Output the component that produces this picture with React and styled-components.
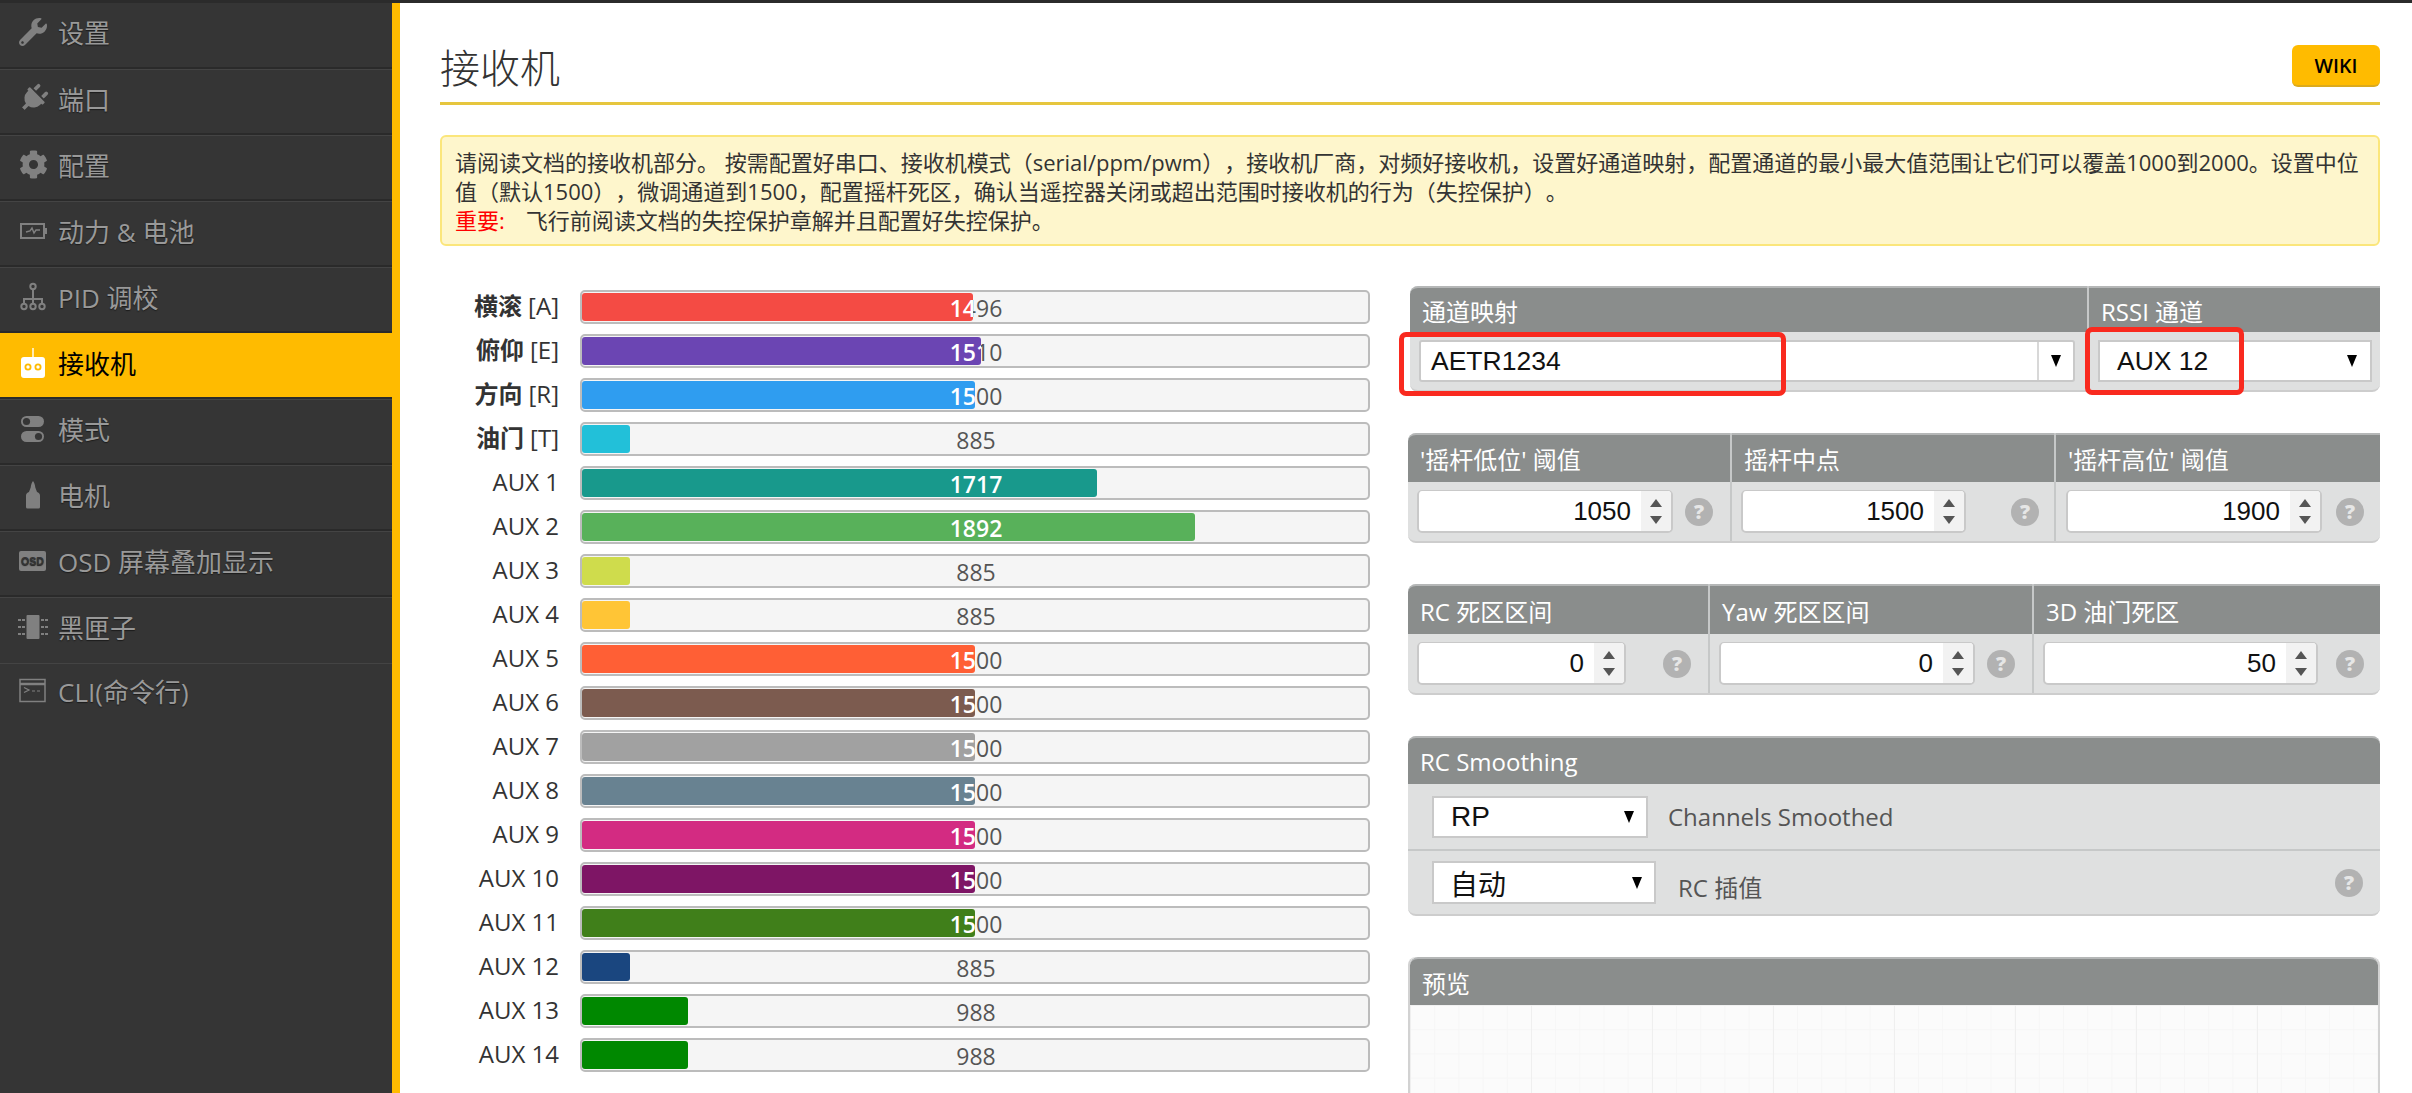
import styled, { createGlobalStyle } from "styled-components";
import { FaWrench, FaPlug, FaCog } from "react-icons/fa";

const Global = createGlobalStyle`
  html, body { margin: 0; padding: 0; background: #fff; }
  body { font-family: "Open Sans", "Noto Sans CJK SC", sans-serif; overflow: hidden; }
  * { box-sizing: border-box; }
`;

const ICON = "#808080";

const BatteryIcon = () => (
  <svg width="30" height="30" viewBox="0 0 30 30" fill="none">
    <rect x="3" y="8" width="23" height="14" stroke={ICON} strokeWidth="2" />
    <rect x="26" y="12" width="3" height="6" fill={ICON} />
    <path d="M8 16l4-1 2-3 2 5 2-3h4" stroke={ICON} strokeWidth="1.4" />
  </svg>
);
const SitemapIcon = () => (
  <svg width="30" height="30" viewBox="0 0 30 30" fill="none" stroke={ICON} strokeWidth="2">
    <circle cx="15" cy="4.5" r="2.7" />
    <circle cx="6" cy="24.5" r="2.7" />
    <circle cx="15" cy="24.5" r="2.7" />
    <circle cx="24" cy="24.5" r="2.7" />
    <path d="M15 7v15M6 22v-5h18v5" />
  </svg>
);
const RemoteIcon = () => (
  <svg width="30" height="30" viewBox="0 0 30 30">
    <path d="M14.3 0h1.4v9h-1.4z" fill="#fff" />
    <rect x="3" y="9" width="24" height="21" rx="3" fill="#fff" />
    <circle cx="10" cy="19" r="2.6" fill="none" stroke="#ffbb00" strokeWidth="1.8" />
    <circle cx="20" cy="19" r="2.6" fill="none" stroke="#ffbb00" strokeWidth="1.8" />
  </svg>
);
const ToggleIcon = () => (
  <svg width="30" height="30" viewBox="0 0 30 30">
    <rect x="3" y="2" width="23" height="11" rx="5.5" fill={ICON} />
    <circle cx="8.5" cy="7.5" r="3.6" fill="#353535" />
    <rect x="3" y="17" width="23" height="11" rx="5.5" fill={ICON} />
    <circle cx="20.5" cy="22.5" r="3.6" fill="#353535" />
  </svg>
);
const MotorIcon = () => (
  <svg width="30" height="30" viewBox="0 0 30 30">
    <path d="M15 1c1.2 1.400 2 3.500 2.300 6.500L19 12c1.500 .6 3 1.500 3 3.500v11.500a1.500 1.500 0 0 1-1.500 1.500h-11a1.500 1.500 0 0 1-1.500-1.500v-11.500c0-2 1.500-2.900 3-3.500l1.700-4.500c.3-3 1.100-5.100 2.300-6.500z" fill={ICON} />
  </svg>
);
const OsdIcon = () => (
  <svg width="30" height="30" viewBox="0 0 30 30">
    <rect x="1" y="5" width="27" height="20" rx="2" fill={ICON} />
    <text x="14.5" y="19" fontSize="10.5" fontWeight="800" textAnchor="middle" fontFamily="'Liberation Sans', sans-serif" fill="#353535">OSD</text>
  </svg>
);
const ChipIcon = () => (
  <svg width="30" height="30" viewBox="0 0 30 30" fill={ICON}>
    <rect x="8.500" y="3" width="13" height="24" rx="1" />
    <path d="M0 7h3v2H0zM4 7h3v2H4zM0 14h3v2H0zM4 14h3v2H4zM0 21h3v2H0zM4 21h3v2H4zM23 7h3v2h-3zM27 7h3v2h-3zM23 14h3v2h-3zM27 14h3v2h-3zM23 21h3v2h-3zM27 21h3v2h-3z" />
  </svg>
);
const CliIcon = () => (
  <svg width="30" height="30" viewBox="0 0 30 30" fill="none" stroke={ICON}>
    <rect x="2" y="3.500" width="25" height="22" strokeWidth="1.500" />
    <path d="M2 8h25" strokeWidth="2.500" />
    <path d="M6 11.500l5 2.500-5 2.500M14 15h3M19 15h3" strokeWidth="1.200" />
  </svg>
);
const PlugIcon = styled(FaPlug)`
  transform: rotate(45deg);
`;

const navItems = [
  { label: "设置", icon: <FaWrench size={28} color={ICON} /> },
  { label: "端口", icon: <PlugIcon size={29} color={ICON} /> },
  { label: "配置", icon: <FaCog size={29} color={ICON} /> },
  { label: "动力 & 电池", icon: <BatteryIcon /> },
  { label: "PID 调校", icon: <SitemapIcon /> },
  { label: "接收机", icon: <RemoteIcon />, active: true },
  { label: "模式", icon: <ToggleIcon /> },
  { label: "电机", icon: <MotorIcon /> },
  { label: "OSD 屏幕叠加显示", icon: <OsdIcon /> },
  { label: "黑匣子", icon: <ChipIcon /> },
  { label: "CLI(命令行)", icon: <CliIcon /> },
];

const channels = [
  ["横滚", "[A]", 1496, "#f44b44"],
  ["俯仰", "[E]", 1510, "#6b45b3"],
  ["方向", "[R]", 1500, "#2f9df0"],
  ["油门", "[T]", 885, "#22c0d9"],
  ["", "AUX 1", 1717, "#18998c"],
  ["", "AUX 2", 1892, "#58b15a"],
  ["", "AUX 3", 885, "#cfdc4c"],
  ["", "AUX 4", 885, "#ffc536"],
  ["", "AUX 5", 1500, "#ff5f35"],
  ["", "AUX 6", 1500, "#7c5b4f"],
  ["", "AUX 7", 1500, "#a1a1a1"],
  ["", "AUX 8", 1500, "#688291"],
  ["", "AUX 9", 1500, "#d32b82"],
  ["", "AUX 10", 1500, "#7e1565"],
  ["", "AUX 11", 1500, "#407f1a"],
  ["", "AUX 12", 885, "#1a467f"],
  ["", "AUX 13", 988, "#008800"],
  ["", "AUX 14", 988, "#008800"],
];

const sticks = [
  { title: "'摇杆低位' 阈值", value: 1050, pad: 9, w: 256, gap: 12 },
  { title: "摇杆中点", value: 1500, pad: 9, w: 225, gap: 45 },
  { title: "'摇杆高位' 阈值", value: 1900, pad: 10, w: 256, gap: 14 },
];
const deadbands = [
  { title: "RC 死区区间", value: 0, pad: 9, w: 209, gap: 37 },
  { title: "Yaw 死区区间", value: 0, pad: 9, w: 256, gap: 12 },
  { title: "3D 油门死区", value: 50, pad: 9, w: 275, gap: 18 },
];

const Page = styled.div`
  width: 2412px;
  height: 1093px;
  overflow: hidden;
  display: flex;
  flex-direction: column;
`;
const TopBar = styled.div`
  height: 3px;
  flex: none;
  background: #2b2b2b;
`;
const Main = styled.div`
  flex: 1;
  display: flex;
  min-height: 0;
`;
const Sidebar = styled.nav`
  width: 400px;
  flex: none;
  background: #353535;
  border-right: 8px solid #ffbb00;
`;
const NavRow = styled.div`
  height: 66px;
  padding: 0 0 6px 18px;
  display: flex;
  align-items: center;
  gap: 10px;
  font-size: 26px;
  color: ${(p) => (p.$active ? "#000" : "#999")};
  background: ${(p) => (p.$active ? "#ffbb00" : "transparent")};
  margin-right: ${(p) => (p.$active ? "-8px" : "0")};
  position: relative;
  border-top: 1px solid ${(p) => (p.$active ? "#ffbb00" : "#444")};
  border-bottom: 2px solid ${(p) => (p.$active ? "#ffbb00" : p.$last ? "transparent" : "#2a2a2a")};
  text-shadow: ${(p) => (p.$active ? "none" : "0 1px 1px #1c1c1c")};
  &:first-child { border-top: 0; }
  &:last-child { padding-bottom: 10px; }
  ${(p) =>
    p.$active &&
    `&::after {
      content: "";
      position: absolute;
      left: 0;
      right: 8px;
      bottom: -2px;
      height: 2px;
      background: #2a2a2a;
    }`}
`;
const NavIcon = styled.span`
  width: 30px;
  height: 30px;
  flex: none;
  display: flex;
  align-items: center;
  justify-content: center;
`;
const Content = styled.main`
  flex: 1;
  padding: 0 32px 0 40px;
  min-width: 0;
`;
const TitleBar = styled.header`
  height: 102px;
  display: flex;
  justify-content: space-between;
  align-items: flex-end;
  border-bottom: 3px solid #e6c63e;
  padding-bottom: 15px;
`;
const Title = styled.h1`
  margin: 0 0 -11px 0;
  font-size: 40px;
  font-weight: 300;
  line-height: 60px;
  color: #333;
`;
const WikiButton = styled.a`
  width: 88px;
  height: 42px;
  display: flex;
  align-items: center;
  justify-content: center;
  background: #ffbb00;
  border-radius: 6px;
  border-bottom: 2px solid #dcaa1c;
  color: #000;
  font-size: 19.5px;
  font-weight: 600;
`;
const Note = styled.div`
  margin-top: 30px;
  height: 111px;
  padding: 11px 12px 0 13px;
  background: #fef6cc;
  border: 2px solid #fbe67b;
  border-radius: 6px;
  font-size: 22px;
  line-height: 29px;
  color: #333;
  text-spacing-trim: space-all;
`;
const Strong = styled.span`
  color: #f00;
  margin-right: 21px;
`;
const Columns = styled.div`
  display: flex;
  margin-top: 40px;
  gap: 38px;
`;
const Receiver = styled.section`
  width: 930px;
  flex: none;
  padding-top: 4px;
  display: flex;
  flex-direction: column;
  gap: 10px;
`;
const BarRow = styled.div`
  display: grid;
  grid-template-columns: 119px 790px;
  gap: 21px;
  align-items: center;
`;
const BarLabel = styled.div`
  text-align: right;
  font-size: 24px;
  line-height: 32px;
  color: #333;
  white-space: nowrap;
  margin-top: -2px;
`;
const BarLabelHan = styled.span`
  font-weight: 700;
  margin-right: 6px;
`;
const Track = styled.div`
  position: relative;
  height: 34px;
  background: #f5f5f5;
  border: 2px solid #bcbcbc;
  border-radius: 5px;
`;
const BarValue = styled.div`
  width: 786px;
  padding-left: 2px;
  text-align: center;
  font-size: 23px;
  line-height: 32px;
  color: ${(p) => (p.$light ? "#fff" : "#555")};
  font-weight: ${(p) => (p.$light ? 600 : 400)};
`;
const BarFill = styled.div`
  position: absolute;
  left: 0;
  top: 1px;
  bottom: 1px;
  overflow: hidden;
  border-radius: 3px;
  background: ${(p) => p.$color};
  ${BarValue} { margin-top: -1px; }
`;
const Settings = styled.section`
  flex: 1;
  min-width: 0;
  display: flex;
  flex-direction: column;
  gap: 41px;
`;
const Panel = styled.div`
  position: relative;
  margin-left: ${(p) => p.$inset || 0}px;
  height: ${(p) => (p.$height ? `${p.$height}px` : "auto")};
  background: #dfe0e0;
  border-radius: 8px;
  border-bottom: 2px solid #cdcdcd;
  display: grid;
  grid-template-columns: ${(p) => p.$cols || "1fr"};
`;
const Column = styled.div`
  display: flex;
  flex-direction: column;
  border-left: ${(p) => (p.$first ? "0" : "2px solid #c6c8c8")};
`;
const Head = styled.div`
  height: ${(p) => p.$h || 48}px;
  flex: none;
  display: flex;
  align-items: center;
  padding-left: 12px;
  background: #8a8d8c;
  color: #fff;
  font-size: 24px;
  border-top: 2px solid #b5b7b7;
  border-radius: ${(p) => (p.$first ? "8px 0 0 0" : "0")};
  &:last-child { border-radius: 0; }
`;
const RoundHead = styled(Head)`
  border-radius: 8px 8px 0 0;
`;
const Cell = styled.div`
  flex: 1;
  display: flex;
  align-items: center;
  padding-left: ${(p) => p.$pad}px;
`;
const NumberBox = styled.div`
  width: ${(p) => p.$w}px;
  height: 43px;
  flex: none;
  display: flex;
  background: #fff;
  border: 2px solid #c9c9c9;
  border-top-width: 1px;
  border-radius: 5px;
  overflow: hidden;
  font-family: "Liberation Sans", Arial, sans-serif;
  font-size: 26px;
  color: #111;
`;
const NumberText = styled.div`
  flex: 1;
  text-align: right;
  line-height: 40px;
  padding-right: 10px;
`;
const Spinner = styled.div`
  width: 30px;
  flex: none;
  background: #f2f2f2;
  display: flex;
  flex-direction: column;
  align-items: center;
  justify-content: center;
  gap: 9px;
`;
const Tri = styled.span`
  width: 0;
  height: 0;
  border-left: 6.500px solid transparent;
  border-right: 6.500px solid transparent;
  ${(p) => (p.$down ? "border-top: 8px solid #555;" : "border-bottom: 8px solid #555;")}
`;
const Help = styled.span`
  width: 28px;
  height: 28px;
  flex: none;
  margin-left: ${(p) => p.$gap || 0}px;
  border-radius: 50%;
  background: #b2b2b2;
  color: #e6e6e6;
  font-size: 20px;
  font-weight: 800;
  line-height: 28px;
  text-align: center;
`;
const SelectBox = styled.div`
  width: ${(p) => p.$w}px;
  height: ${(p) => p.$h || 42}px;
  flex: none;
  display: flex;
  align-items: center;
  background: #fff;
  border: 2px solid #c9c9c9;
  border-radius: ${(p) => p.$radius || 0}px;
  font-family: "Liberation Sans", "Noto Sans CJK SC", Arial, sans-serif;
  font-size: ${(p) => p.$size || 26.5}px;
  color: #111;
  padding-left: ${(p) => p.$pad}px;
`;
const SelectText = styled.span`
  flex: 1;
`;
const CaretSlot = styled.span`
  width: ${(p) => p.$w}px;
  flex: none;
  align-self: stretch;
  display: flex;
  align-items: center;
  justify-content: center;
  border-left: ${(p) => (p.$line ? "2px solid #d8d8d8" : "0")};
`;
const Caret = styled.span`
  width: 0;
  height: 0;
  border-left: 5.500px solid transparent;
  border-right: 5.500px solid transparent;
  border-top: 12px solid #000;
`;
const Callout = styled.div`
  position: absolute;
  left: ${(p) => p.$left}px;
  top: ${(p) => p.$top}px;
  width: ${(p) => p.$w}px;
  height: ${(p) => p.$h}px;
  border: 5px solid #f92a1f;
  border-radius: 7px;
  pointer-events: none;
`;
const SmoothRow = styled.div`
  height: ${(p) => p.$h}px;
  display: flex;
  align-items: center;
  padding: 0 17px 0 24px;
  border-bottom: ${(p) => (p.$line ? "2px solid #c6c8c8" : "0")};
`;
const SmoothLabel = styled.span`
  margin-left: ${(p) => p.$gap}px;
  margin-top: ${(p) => p.$drop || 0}px;
  font-size: 24px;
  color: #555;
  flex: 1;
`;
const PreviewPanel = styled.div`
  height: 300px;
  border: 2px solid #d2d2d2;
  border-top: 0;
  border-radius: 8px 8px 0 0;
`;
const Canvas = styled.div`
  height: 240px;
  background-color: #fbfbfb;
  background-image:
    linear-gradient(to right, #efefef 1px, transparent 1px),
    linear-gradient(to bottom, #f1f1f1 1px, transparent 1px),
    linear-gradient(to right, #f6f6f6 1px, transparent 1px),
    linear-gradient(to bottom, #f6f6f6 1px, transparent 1px);
  background-size: 121px 121px, 121px 121px, 24.200px 24.200px, 24.200px 24.200px;
`;

const pct = (v) => ((v - 800) / 1400) * 100;

const Meter = ({ han, name, value, color }) => (
  <BarRow>
    <BarLabel>
      {han && <BarLabelHan>{han}</BarLabelHan>}
      {name}
    </BarLabel>
    <Track>
      <BarValue>{value}</BarValue>
      <BarFill $color={color} style={{ width: `${pct(value)}%` }}>
        <BarValue $light>{value}</BarValue>
      </BarFill>
    </Track>
  </BarRow>
);

const NumberField = ({ value, w }) => (
  <NumberBox $w={w}>
    <NumberText>{value}</NumberText>
    <Spinner>
      <Tri />
      <Tri $down />
    </Spinner>
  </NumberBox>
);

const FieldGroup = ({ fields, cols, height, headHeight }) => (
  <Panel $cols={cols} $height={height}>
    {fields.map((f, i) => (
      <Column key={f.title} $first={i === 0}>
        <Head $first={i === 0} $h={headHeight}>{f.title}</Head>
        <Cell $pad={f.pad}>
          <NumberField value={f.value} w={f.w} />
          <Help $gap={f.gap}>?</Help>
        </Cell>
      </Column>
    ))}
  </Panel>
);

export default function App() {
  return (
    <Page>
      <Global />
      <TopBar />
      <Main>
        <Sidebar>
          {navItems.map((n, i) => (
            <NavRow key={n.label} $active={n.active} $last={i >= navItems.length - 2}>
              <NavIcon>{n.icon}</NavIcon>
              {n.label}
            </NavRow>
          ))}
        </Sidebar>
        <Content>
          <TitleBar>
            <Title>接收机</Title>
            <WikiButton>WIKI</WikiButton>
          </TitleBar>
          <Note>
            请阅读文档的接收机部分。 按需配置好串口、接收机模式（serial/ppm/pwm），接收机厂商，对频好接收机，设置好通道映射，配置通道的最小最大值范围让它们可以覆盖1000到2000。设置中位值（默认1500），微调通道到1500，配置摇杆死区，确认当遥控器关闭或超出范围时接收机的行为（失控保护）。
            <br />
            <Strong>重要:</Strong>飞行前阅读文档的失控保护章解并且配置好失控保护。
          </Note>
          <Columns>
            <Receiver>
              {channels.map(([han, name, value, color]) => (
                <Meter key={name} han={han} name={name} value={value} color={color} />
              ))}
            </Receiver>
            <Settings>
              <Panel $inset={2} $height={106} $cols="677px 1fr">
                <Column $first>
                  <Head $first $h={46}>通道映射</Head>
                  <Cell $pad={9}>
                    <SelectBox $w={656} $pad={10} $radius={3}>
                      <SelectText>AETR1234</SelectText>
                      <CaretSlot $w={36} $line><Caret /></CaretSlot>
                    </SelectBox>
                  </Cell>
                </Column>
                <Column>
                  <Head $h={46}>RSSI 通道</Head>
                  <Cell $pad={9}>
                    <SelectBox $w={274} $pad={17}>
                      <SelectText>AUX 12</SelectText>
                      <CaretSlot $w={36}><Caret /></CaretSlot>
                    </SelectBox>
                  </Cell>
                </Column>
                <Callout $left={-11} $top={46} $w={387} $h={64} />
                <Callout $left={675} $top={41} $w={159} $h={68} />
              </Panel>
              <FieldGroup fields={sticks} cols="322px 324px 1fr" height={110} headHeight={49} />
              <FieldGroup fields={deadbands} cols="300px 324px 1fr" height={111} headHeight={50} />
              <Panel $height={180}>
                <Column $first>
                  <RoundHead>RC Smoothing</RoundHead>
                  <SmoothRow $h={67} $line>
                    <SelectBox $w={216} $pad={17} $size={28}>
                      <SelectText>RP</SelectText>
                      <CaretSlot $w={34}><Caret /></CaretSlot>
                    </SelectBox>
                    <SmoothLabel $gap={20}>Channels Smoothed</SmoothLabel>
                  </SmoothRow>
                  <SmoothRow $h={63}>
                    <SelectBox $w={224} $h={43} $pad={16} $size={28}>
                      <SelectText>自动</SelectText>
                      <CaretSlot $w={34}><Caret /></CaretSlot>
                    </SelectBox>
                    <SmoothLabel $gap={22} $drop={8}>RC 插值</SmoothLabel>
                    <Help>?</Help>
                  </SmoothRow>
                </Column>
              </Panel>
              <PreviewPanel>
                <RoundHead>预览</RoundHead>
                <Canvas />
              </PreviewPanel>
            </Settings>
          </Columns>
        </Content>
      </Main>
    </Page>
  );
}
